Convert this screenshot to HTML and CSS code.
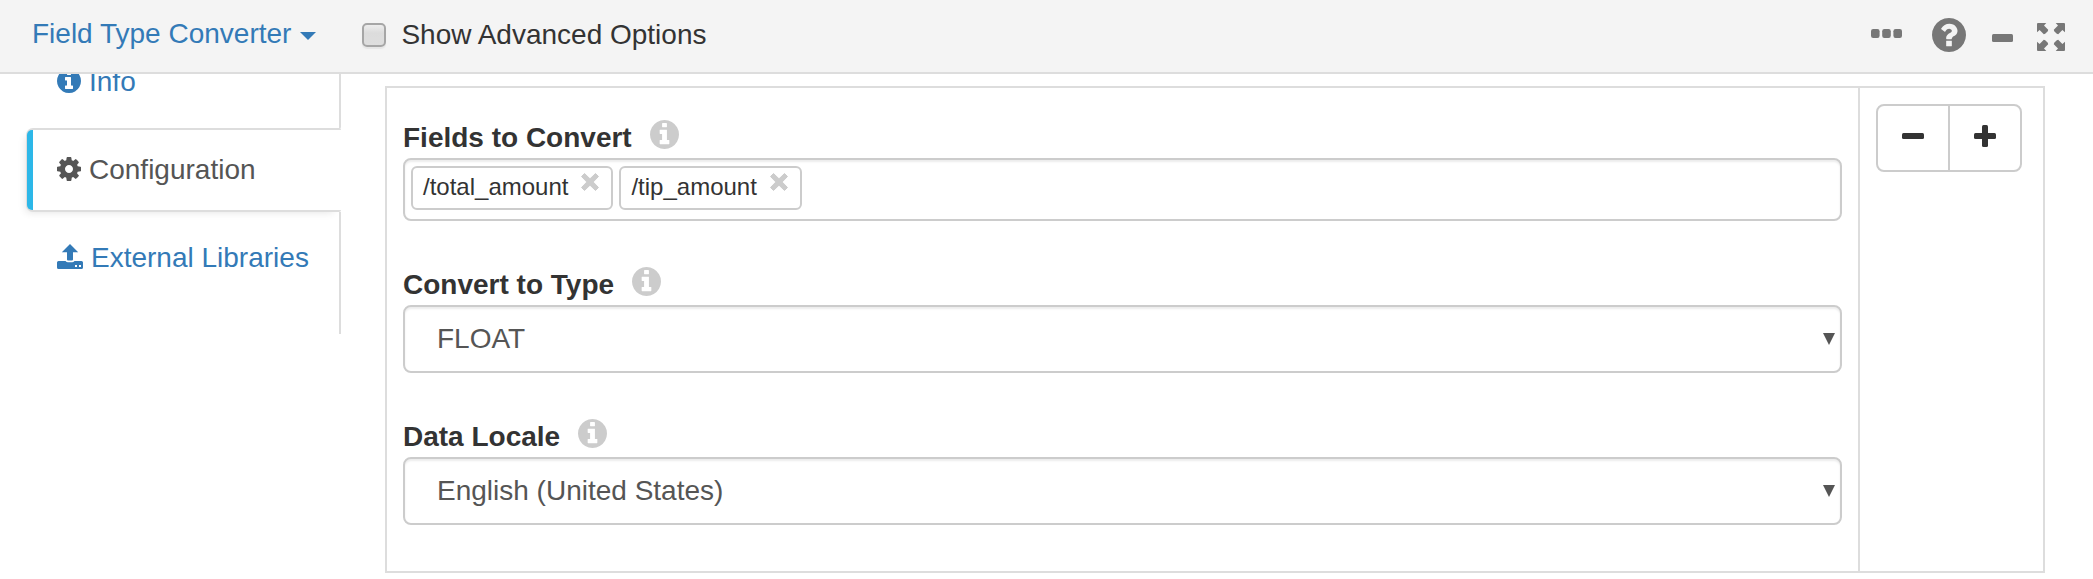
FILE: index.html
```html
<!DOCTYPE html>
<html lang="en">
<head>
<meta charset="utf-8">
<title>Field Type Converter</title>
<link rel="stylesheet" href="styles.css">
</head>
<body>
<svg class="defs" width="0" height="0">
  <symbol id="info" viewBox="128 128 1536 1536"><path d="M1152 1376v-160q0-14-9-23t-23-9h-96v-512q0-14-9-23t-23-9h-320q-14 0-23 9t-9 23v160q0 14 9 23t23 9h96v320h-96q-14 0-23 9t-9 23v160q0 14 9 23t23 9h448q14 0 23-9t9-23zm-128-896v-160q0-14-9-23t-23-9h-192q-14 0-23 9t-9 23v160q0 14 9 23t23 9h192q14 0 23-9t9-23zm640 416q0 209-103 385.500t-279.500 279.500-385.500 103-385.500-103-279.500-279.500-103-385.500 103-385.500 279.500-279.500 385.500-103 385.500 103 279.500 279.500 103 385.500z"/></symbol>
  <symbol id="times" viewBox="0 0 18 18"><path d="M3.500 0.500 9 5.800 14.500 0.500 17.500 3.500 12.200 9 17.500 14.500 14.500 17.500 9 12.200 3.500 17.500 0.500 14.500 5.800 9 0.500 3.500z" stroke="currentColor" stroke-width="1" stroke-linejoin="round"/></symbol>
</svg>
<header class="topbar">
  <a class="title">Field Type Converter</a>
  <svg class="caret" viewBox="0 0 16 8"><path d="M0 0h16l-8 8z"/></svg>
  <span class="checkbox"></span>
  <span class="advanced">Show Advanced Options</span>
  <div class="tools">
    <svg class="ellipsis" viewBox="0 0 31 9"><rect width="8.600" height="9" rx="2.200"/><rect x="11.200" width="8.600" height="9" rx="2.200"/><rect x="22.400" width="8.600" height="9" rx="2.200"/></svg>
    <svg class="help" viewBox="128 128 1536 1536"><path d="M1024 1376v-192q0-14-9-23t-23-9h-192q-14 0-23 9t-9 23v192q0 14 9 23t23 9h192q14 0 23-9t9-23zm256-672q0-88-55.500-163t-138.500-116-170-41q-243 0-371 213-15 24 8 42l132 100q7 6 19 6 16 0 25-12 53-68 86-92 34-24 86-24 48 0 85.500 26t37.500 59q0 38-20 61t-68 45q-63 28-115.500 86.500t-52.500 125.500v36q0 14 9 23t23 9h192q14 0 23-9t9-23q0-19 21.500-49.500t54.500-49.500q32-18 49-28.500t46-35 44.500-48 28-60.500 12.500-81zm384 192q0 209-103 385.500t-279.500 279.500-385.500 103-385.500-103-279.500-279.500-103-385.500 103-385.500 279.500-279.500 385.500-103 385.500 103 279.500 279.500 103 385.500z"/></svg>
    <svg class="minimize" viewBox="0 0 21 8"><rect width="21" height="8" rx="1.500"/></svg>
    <svg class="expand" viewBox="0 0 28 28"><path id="arrow" d="M0 1q0-1 1-1h8.300L7 2.600 11.200 6.800 10.800 8.200 8.200 10.800 6.800 11.200 2.600 7 0 9.300z"/><use href="#arrow" transform="matrix(-1 0 0 1 28 0)"/><use href="#arrow" transform="matrix(1 0 0 -1 0 28)"/><use href="#arrow" transform="rotate(180 14 14)"/></svg>
  </div>
</header>
<div class="content">
  <nav class="tabs">
    <a class="tab first"><svg class="icon"><use href="#info"/></svg><span>Info</span></a>
    <a class="tab active"><svg class="icon" viewBox="128 128 1536 1536"><path d="M1152 896q0-106-75-181t-181-75-181 75-75 181 75 181 181 75 181-75 75-181zm512-109v222q0 12-8 23t-20 13l-185 28q-19 54-39 91 35 50 107 138 10 12 10 25t-9 23q-27 37-99 108t-94 71q-12 0-26-9l-138-108q-44 23-91 38-16 136-29 186-7 28-36 28h-222q-14 0-24.500-8.500t-11.500-21.500l-28-184q-49-16-90-37l-141 107q-10 9-25 9-14 0-25-11-126-114-165-168-7-10-7-23 0-12 8-23 15-21 51-66.500t54-70.500q-27-50-41-99l-183-27q-13-2-21-12.500t-8-23.500v-222q0-12 8-23t19-13l186-28q14-46 39-92-40-57-107-138-10-12-10-24 0-10 9-23 26-36 98.500-107.500t94.500-71.500q13 0 26 10l138 107q44-23 91-38 16-136 29-186 7-28 36-28h222q14 0 24.500 8.500t11.500 21.500l28 184q49 16 90 37l142-107q9-9 24-9 13 0 25 10 129 119 165 170 7 8 7 22 0 12-8 23-15 21-51 66.500t-54 70.500q26 50 41 98l183 28q13 2 21 12.500t8 23.500z"/></svg><span>Configuration</span></a>
    <a class="tab last"><svg class="icon upload" viewBox="0 0 26 25"><path fill-rule="evenodd" d="M13 0 21.200 8.200H16V15.500q0 1-1 1H11q-1 0-1-1V8.200H4.800zM1.500 17H8.500q1 1.300 2.500 1.300h4q1.500 0 2.500-1.300h7q1.500 0 1.500 1.500v5q0 1.500-1.500 1.500h-23Q0 25 0 23.500v-5Q0 17 1.500 17zM18 21v2h2v-2zm4 0v2h2v-2z"/></svg><span>External Libraries</span></a>
  </nav>
  <main class="panel">
    <section class="fields">
      <div class="label"><span>Fields to Convert</span><svg><use href="#info"/></svg></div>
      <div class="input tags">
        <span class="tag">/total_amount<svg><use href="#times"/></svg></span>
        <span class="tag">/tip_amount<svg><use href="#times"/></svg></span>
      </div>
      <div class="label type"><span>Convert to Type</span><svg><use href="#info"/></svg></div>
      <div class="input select"><span>FLOAT</span><svg viewBox="0 0 12 12"><path d="M0 0h12L6 12z"/></svg></div>
      <div class="label locale"><span>Data Locale</span><svg><use href="#info"/></svg></div>
      <div class="input select"><span>English (United States)</span><svg viewBox="0 0 12 12"><path d="M0 0h12L6 12z"/></svg></div>
    </section>
    <aside class="actions">
      <div class="group">
        <span class="btn"><svg viewBox="0 0 22 22"><rect y="8" width="22" height="6" rx="1.500"/></svg></span>
        <span class="btn"><svg viewBox="0 0 22 22"><rect y="8" width="22" height="6" rx="1.500"/><rect x="8" width="6" height="22" rx="1.500"/></svg></span>
      </div>
    </aside>
  </main>
</div>
</body>
</html>
```
FILE: styles.css
```css
* { box-sizing: border-box; }
body {
  margin: 0;
  height: 579px;
  overflow: hidden;
  background: #fff;
  color: #333;
  font: 28px/40px "Liberation Sans", Arial, sans-serif;
}
svg { display: block; flex: none; fill: currentColor; }
.defs { position: absolute; }
.topbar {
  display: flex;
  height: 74px;
  padding: 0 28px 0 32px;
  background: #f4f4f4;
  border-bottom: 2px solid #ddd;
}
.title { margin-top: 14px; color: #337ab7; white-space: nowrap; }
.caret { width: 16px; height: 8px; margin: 32px 0 0 9px; color: #337ab7; }
.checkbox {
  width: 24px;
  height: 24px;
  margin: 23px 0 0 46px;
  border: 2px solid #a6a6a6;
  border-radius: 5px;
  background: linear-gradient(#ededed, #dcdcdc 40%, #dedede);
  box-shadow: 0 2px 1px #e6e6e6;
}
.advanced { margin: 15px 0 0 15px; white-space: nowrap; }
.tools { display: flex; margin-left: auto; color: #777; }
.ellipsis { width: 31px; height: 9px; margin-top: 29px; }
.help { width: 34px; height: 34px; margin: 18px 0 0 30px; }
.minimize { width: 21px; height: 8px; margin: 34px 0 0 26px; }
.expand { width: 28px; height: 28px; margin: 23px 0 0 24px; }
.content { display: flex; height: 505px; overflow: hidden; }
.tabs { width: 315px; height: 260px; margin-left: 26px; }
.tab {
  display: flex;
  gap: 8px;
  padding-left: 31px;
  color: #337ab7;
  border-right: 2px solid #ddd;
  white-space: nowrap;
}
.tab .icon { width: 24px; height: 24px; }
.tab .icon.upload { width: 26px; height: 25px; margin-top: 32px; }
.tab.first { height: 55px; border-bottom-right-radius: 2px; }
.tab.first .icon { margin-top: -5px; }
.tab.first span { margin-top: -12px; }
.tab.active {
  position: relative;
  height: 84px;
  margin-top: -1px;
  padding-left: 29px;
  color: #555;
  background: #fff;
  border: 2px solid #ddd;
  border-right: 0;
  border-radius: 7px 2px 2px 7px;
  box-shadow: -4px 4px 8px -4px rgba(0, 0, 0, .12);
}
.tab.active::before {
  content: "";
  position: absolute;
  left: -1px;
  top: 0;
  width: 6px;
  height: 80px;
  background: #2cb7e8;
  border-radius: 5px 0 0 5px;
}
.tab.active .icon { margin-top: 27px; }
.tab.active span { margin-top: 20px; }
.tab.last { height: 122px; }
.tab.last span { margin-top: 26px; }
.panel {
  display: flex;
  width: 1660px;
  height: 487px;
  margin: 12px 0 0 44px;
  border: 2px solid #ddd;
}
.fields { width: 1471px; padding: 0 16px; }
.label { display: flex; gap: 18px; height: 40px; margin-top: 30px; font-weight: bold; white-space: nowrap; }
.label svg { width: 29px; height: 29px; margin-top: 2px; color: #ccc; }
.label.type { margin-top: 44px; }
.label.locale { margin-top: 44px; }
.input {
  display: flex;
  width: 1439px;
  border: 2px solid #ccc;
  border-radius: 8px;
  box-shadow: inset 0 2px 2px rgba(0, 0, 0, .075);
}
.tags { height: 63px; padding: 6px; gap: 6px; }
.tag {
  display: flex;
  gap: 13px;
  height: 44px;
  padding: 0 12px 0 10px;
  border: 2px solid #ccc;
  border-radius: 6px;
  font-size: 24px;
  line-height: 38px;
}
.tag svg { width: 18px; height: 18px; margin-top: 5px; color: #ccc; }
.select {
  height: 68px;
  padding: 0 5px 0 32px;
  justify-content: space-between;
  color: #555;
}
.select span { margin-top: 12px; }
.select svg { width: 12px; height: 12px; margin-top: 26px; }
.actions { flex: 1; border-left: 2px solid #ddd; padding: 16px; }
.group { display: flex; width: 146px; height: 68px; border: 2px solid #ccc; border-radius: 8px; }
.btn { width: 70px; padding: 19px 0 0 24px; }
.btn + .btn { width: 72px; border-left: 2px solid #ccc; }
.btn svg { width: 22px; height: 22px; }
```
